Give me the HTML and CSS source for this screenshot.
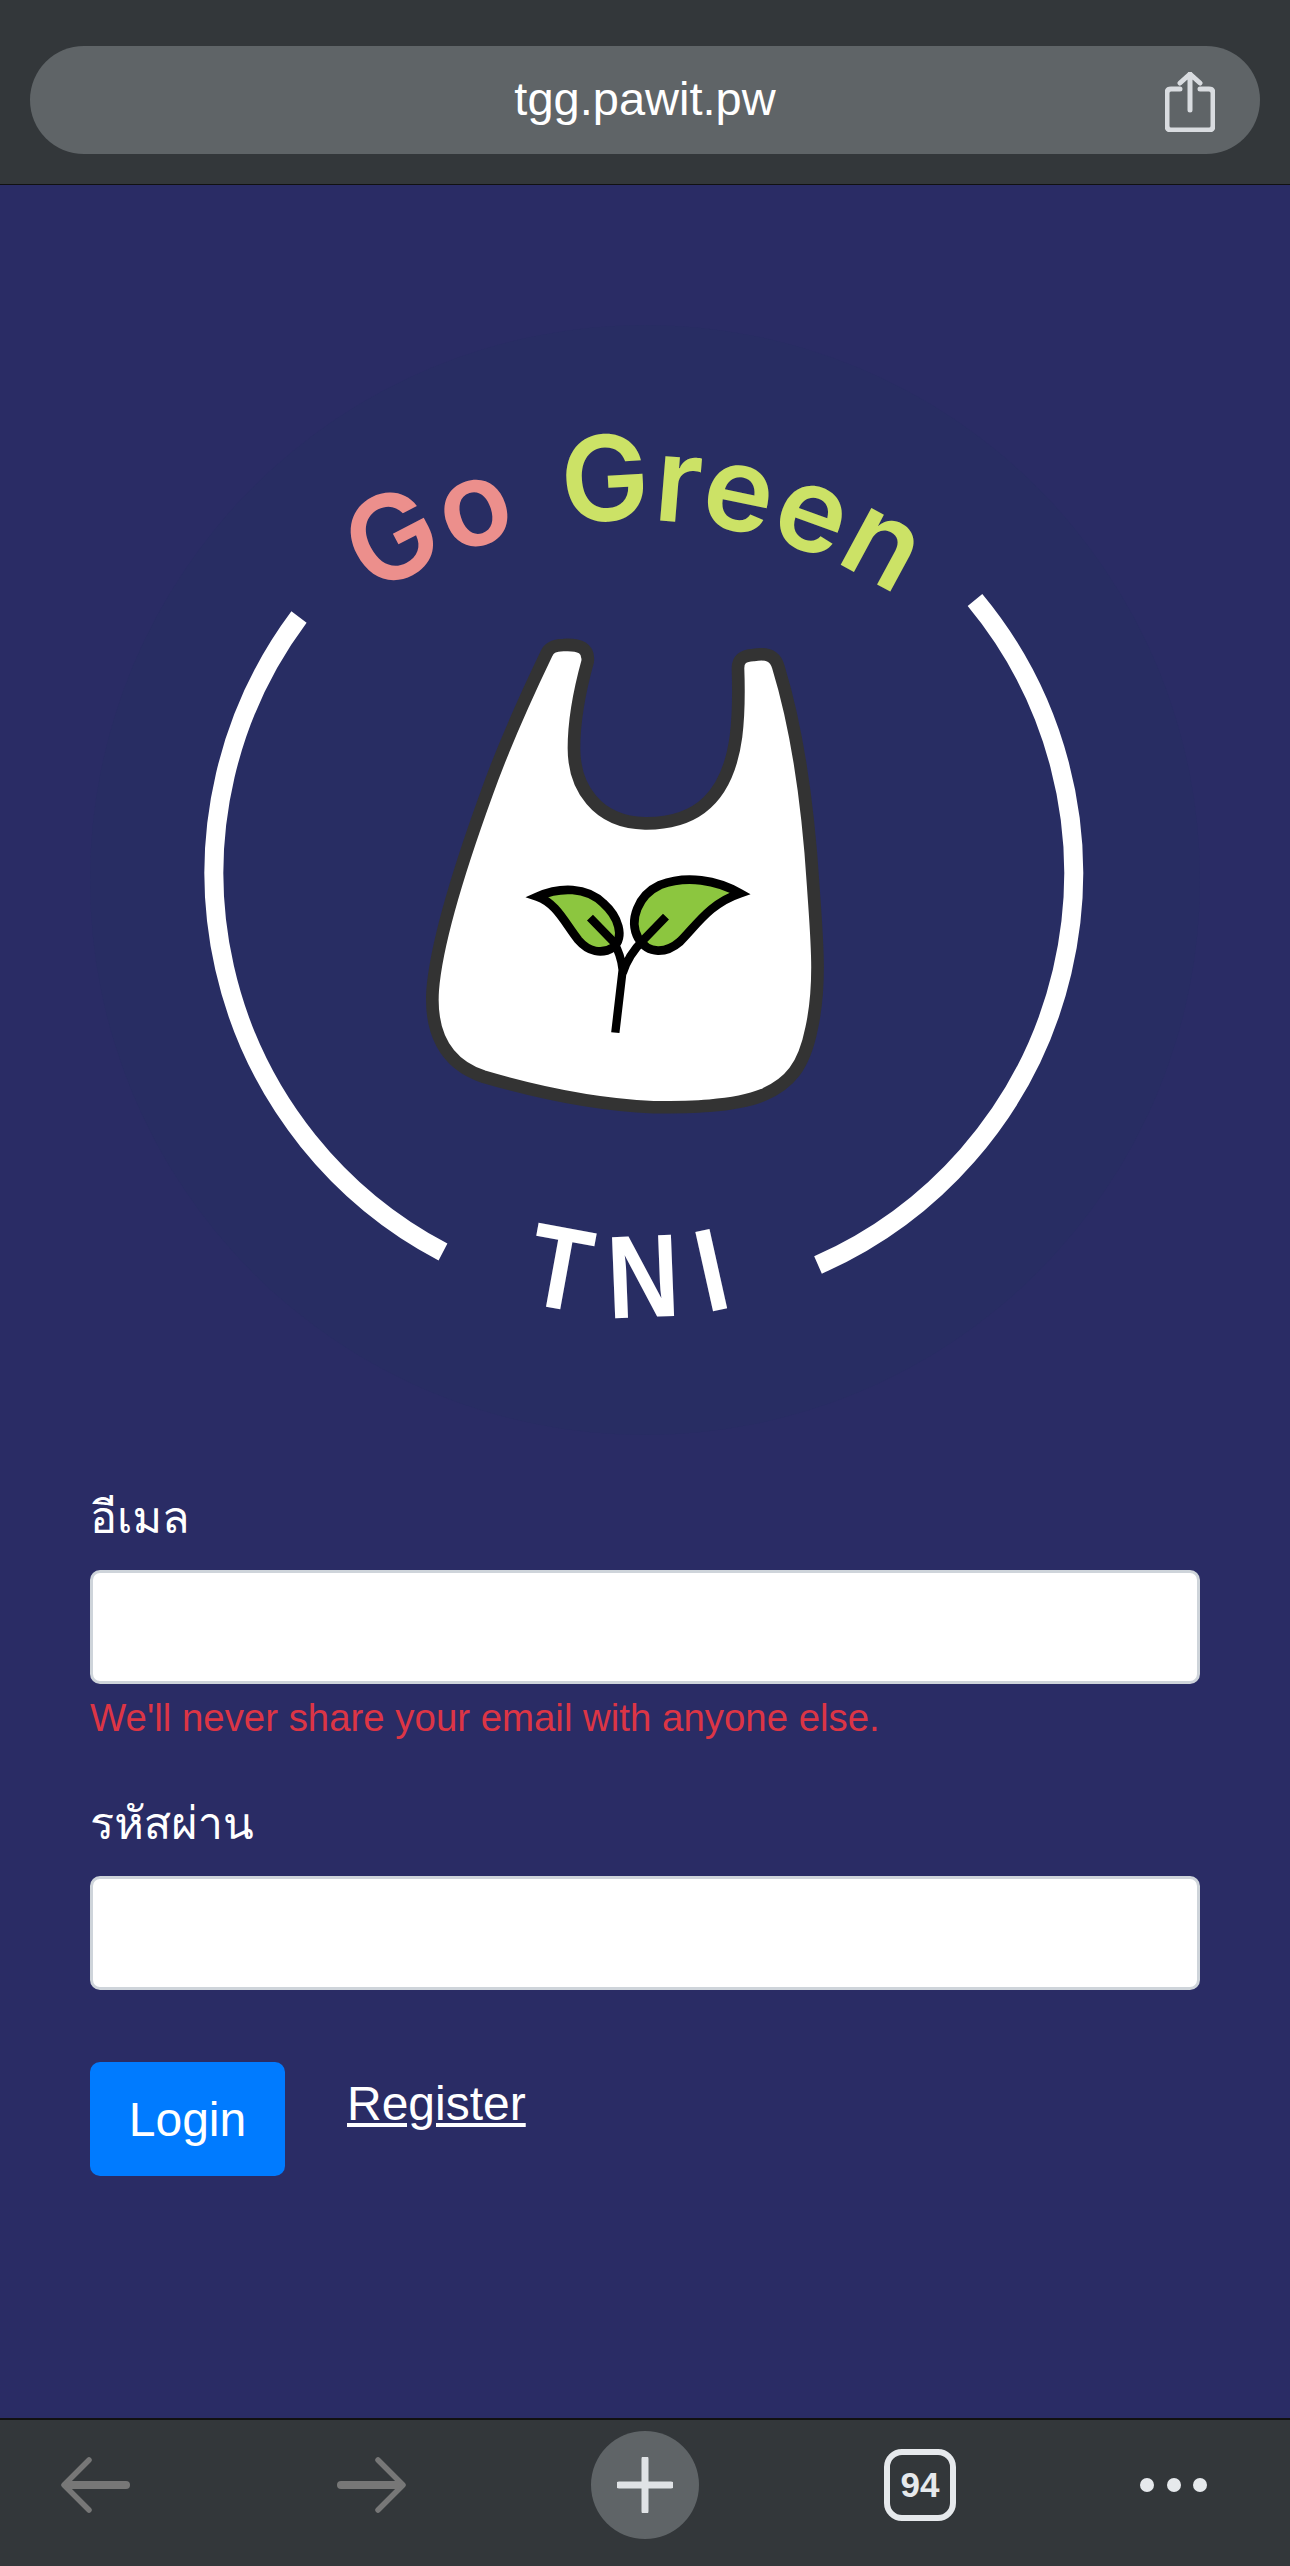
FILE: index.html
```html
<!DOCTYPE html>
<html lang="th">
<head>
  <meta charset="UTF-8">
  <title>Go Green TNI</title>
  <link rel="stylesheet" href="styles.css">
</head>
<body>
  <div class="screen">
    <!-- browser address bar -->
    <header class="top-bar">
      <div class="url-pill">
        <span class="url-text">tgg.pawit.pw</span>
        <svg class="share-icon" viewBox="0 0 50 60" width="50" height="60">
          <path d="M15 17H6Q2 17 2 21V54Q2 58 6 58H44Q48 58 48 54V21Q48 17 44 17H35"/>
          <path d="M25 2V38M15 11L25 2L35 11"/>
        </svg>
      </div>
    </header>

    <main class="content">
      <svg class="logo" viewBox="90 325 1110 1110" width="1110" height="1110">
        <defs>
          <path id="arcTop" d="M149 1006A486 486 0 0 1 1121 1006"/>
          <path id="arcBottom" d="M221 897A420 420 0 0 0 1061 897"/>
        </defs>
        <circle class="logo-disc" cx="645" cy="880" r="555"/>
        <path class="ring" d="M299 617A428 428 0 0 0 443 1252"/>
        <path class="ring" d="M975 600A428 428 0 0 1 818 1265"/>
        <text class="logo-title">
          <textPath href="#arcTop" startOffset="50%" text-anchor="middle"><tspan class="word-go">Go</tspan> <tspan class="word-green">Green</tspan></textPath>
        </text>
        <text class="logo-tni">
          <textPath href="#arcBottom" startOffset="50%" text-anchor="middle" textLength="238" lengthAdjust="spacingAndGlyphs">TNI</textPath>
        </text>
        <g transform="translate(400 620) scale(0.3333)">
          <path class="bag" d="M440 100C447 82 462 76 490 75C540 72 568 85 563 125C545 190 522 290 522 385C522 500 590 608 735 610C900 612 985 520 1008 350C1018 270 1016 200 1014 145C1014 115 1030 107 1060 105C1100 98 1125 105 1135 140C1190 320 1225 560 1240 800C1250 950 1265 1090 1235 1225C1212 1340 1170 1390 1090 1425C1000 1462 860 1462 760 1462C600 1455 420 1420 250 1370C130 1330 90 1230 98 1110C110 960 180 740 260 520C310 380 380 225 440 100Z"/>
          <path class="leaf" d="M412 830C480 800 560 800 610 850C655 890 675 950 640 982C605 1005 565 995 535 960C495 910 470 850 412 830Z"/>
          <path class="leaf" d="M1020 820C950 780 860 765 780 795C715 825 685 900 715 955C745 1005 800 1000 840 965C890 915 930 850 1020 820Z"/>
          <path class="stem" d="M646 1238L668 1050C665 1020 655 990 640 965L570 893M668 1060C680 1020 705 985 730 960L798 890"/>
        </g>
      </svg>

      <form class="login-form">
        <div class="form-group">
          <label class="form-label" for="email">อีเมล</label>
          <input class="form-input" id="email" type="email">
          <small class="form-help">We'll never share your email with anyone else.</small>
        </div>
        <div class="form-group">
          <label class="form-label" for="password">รหัสผ่าน</label>
          <input class="form-input" id="password" type="password">
        </div>
        <div class="form-actions">
          <button class="btn-login" type="button">Login</button>
          <a class="link-register" href="#">Register</a>
        </div>
      </form>
    </main>

    <!-- browser toolbar -->
    <footer class="bottom-bar">
      <svg class="nav-icon" viewBox="0 0 70 56" width="70" height="56">
        <path class="arrow-head" d="M29 3L4 28L29 53"/>
        <path class="arrow-shaft" d="M8 28H66"/>
      </svg>
      <svg class="nav-icon" viewBox="0 0 70 56" width="70" height="56">
        <path class="arrow-head" d="M41 3L66 28L41 53"/>
        <path class="arrow-shaft" d="M4 28H62"/>
      </svg>
      <div class="new-tab">
        <svg viewBox="0 0 56 56" width="56" height="56"><path d="M28 2V54M2 28H54"/></svg>
      </div>
      <div class="tab-count">94</div>
      <div class="more-dots"><span></span><span></span><span></span></div>
    </footer>
  </div>
</body>
</html>
```

FILE: styles.css
```css
* {
  box-sizing: border-box;
}

body {
  margin: 0;
  font-family: "Liberation Sans", Arial, sans-serif;
  background-color: #2a2c65;
}

.screen {
  display: flex;
  flex-direction: column;
  width: 1290px;
  height: 2566px;
  overflow: hidden;
}

/* address bar */
.top-bar {
  height: 185px;
  padding: 46px 30px 0;
  background-color: #33373a;
  border-bottom: 1px solid #111;
}

.url-pill {
  position: relative;
  display: flex;
  justify-content: center;
  align-items: center;
  height: 108px;
  border-radius: 54px;
  background-color: #5f6467;
}

.url-text {
  padding-bottom: 3px;
  color: #fff;
  font-size: 47px;
}

.share-icon {
  position: absolute;
  right: 45px;
  top: 26px;
  fill: none;
  stroke: #d9dce0;
  stroke-width: 5;
  stroke-linecap: round;
  stroke-linejoin: round;
}

/* page */
.content {
  flex: 1;
  padding: 140px 90px 0;
  background-color: #2a2c65;
}

.logo {
  display: block;
}

.logo-disc {
  fill: #282d63;
}

.ring {
  fill: none;
  stroke: #fff;
  stroke-width: 19;
}

.logo-title {
  font-family: Inter, sans-serif;
  font-size: 118px;
  font-weight: 600;
  letter-spacing: 1px;
  word-spacing: 12px;
}

.word-go {
  fill: #ec8f8c;
}

.word-green {
  fill: #cce266;
}

.logo-tni {
  font-family: "Liberation Sans", sans-serif;
  font-size: 118px;
  font-weight: 700;
  letter-spacing: 30px;
  fill: #fff;
}

.bag {
  fill: #fff;
  stroke: #333;
  stroke-width: 38;
  stroke-linejoin: round;
}

.leaf {
  fill: #8cc63f;
  stroke: #000;
  stroke-width: 26;
  stroke-miterlimit: 12;
}

.stem {
  fill: none;
  stroke: #000;
  stroke-width: 25;
}

/* form */
.login-form {
  padding-top: 47px;
}

.form-group {
  margin-bottom: 48px;
}

.form-label {
  display: block;
  margin-bottom: 16px;
  color: #fff;
  font-size: 45px;
  line-height: 72px;
  font-family: "Liberation Sans", Loma, Garuda, Waree, "Noto Sans", sans-serif;
}

.form-input {
  display: block;
  width: 100%;
  height: 114px;
  border: 3px solid #ced4da;
  border-radius: 10px;
  background-color: #fff;
}

.form-help {
  display: block;
  margin-top: 12px;
  color: #dc3545;
  font-size: 38.4px;
  line-height: 44px;
}

.form-actions {
  display: flex;
  align-items: flex-start;
  gap: 62px;
  padding-top: 24px;
}

.btn-login {
  width: 195px;
  height: 114px;
  border: 0;
  border-radius: 10px;
  background-color: #007bff;
  color: #fff;
  font-family: inherit;
  font-size: 48px;
}

.link-register {
  padding-top: 6px;
  color: #fff;
  font-size: 48px;
  line-height: 72px;
  text-decoration: underline;
}

/* toolbar */
.bottom-bar {
  display: flex;
  align-items: center;
  height: 148px;
  padding: 0 0 16px 60px;
  background-color: #33373a;
  border-top: 2px solid #111;
}

.nav-icon {
  fill: none;
  stroke: #777;
  stroke-linecap: round;
  stroke-linejoin: round;
  margin-right: 207px;
}

.nav-icon + .nav-icon {
  margin-right: 0;
}

.arrow-head {
  stroke-width: 5.5;
}

.arrow-shaft {
  stroke-width: 8;
}

.new-tab {
  display: flex;
  justify-content: center;
  align-items: center;
  width: 108px;
  height: 108px;
  margin-left: 184px;
  border-radius: 50%;
  background-color: #5f6467;
}

.new-tab svg {
  fill: none;
  stroke: #e0e3e6;
  stroke-width: 7;
  stroke-linecap: round;
}

.tab-count {
  width: 72px;
  height: 72px;
  margin-left: 185px;
  border: 6px solid #e6e9ec;
  border-radius: 18px;
  color: #e6e9ec;
  font-size: 35px;
  font-weight: 700;
  line-height: 60px;
  text-align: center;
}

.more-dots {
  display: flex;
  gap: 12.5px;
  margin-left: 184px;
}

.more-dots span {
  width: 14px;
  height: 14px;
  border-radius: 50%;
  background-color: #e6e9ec;
}
```
